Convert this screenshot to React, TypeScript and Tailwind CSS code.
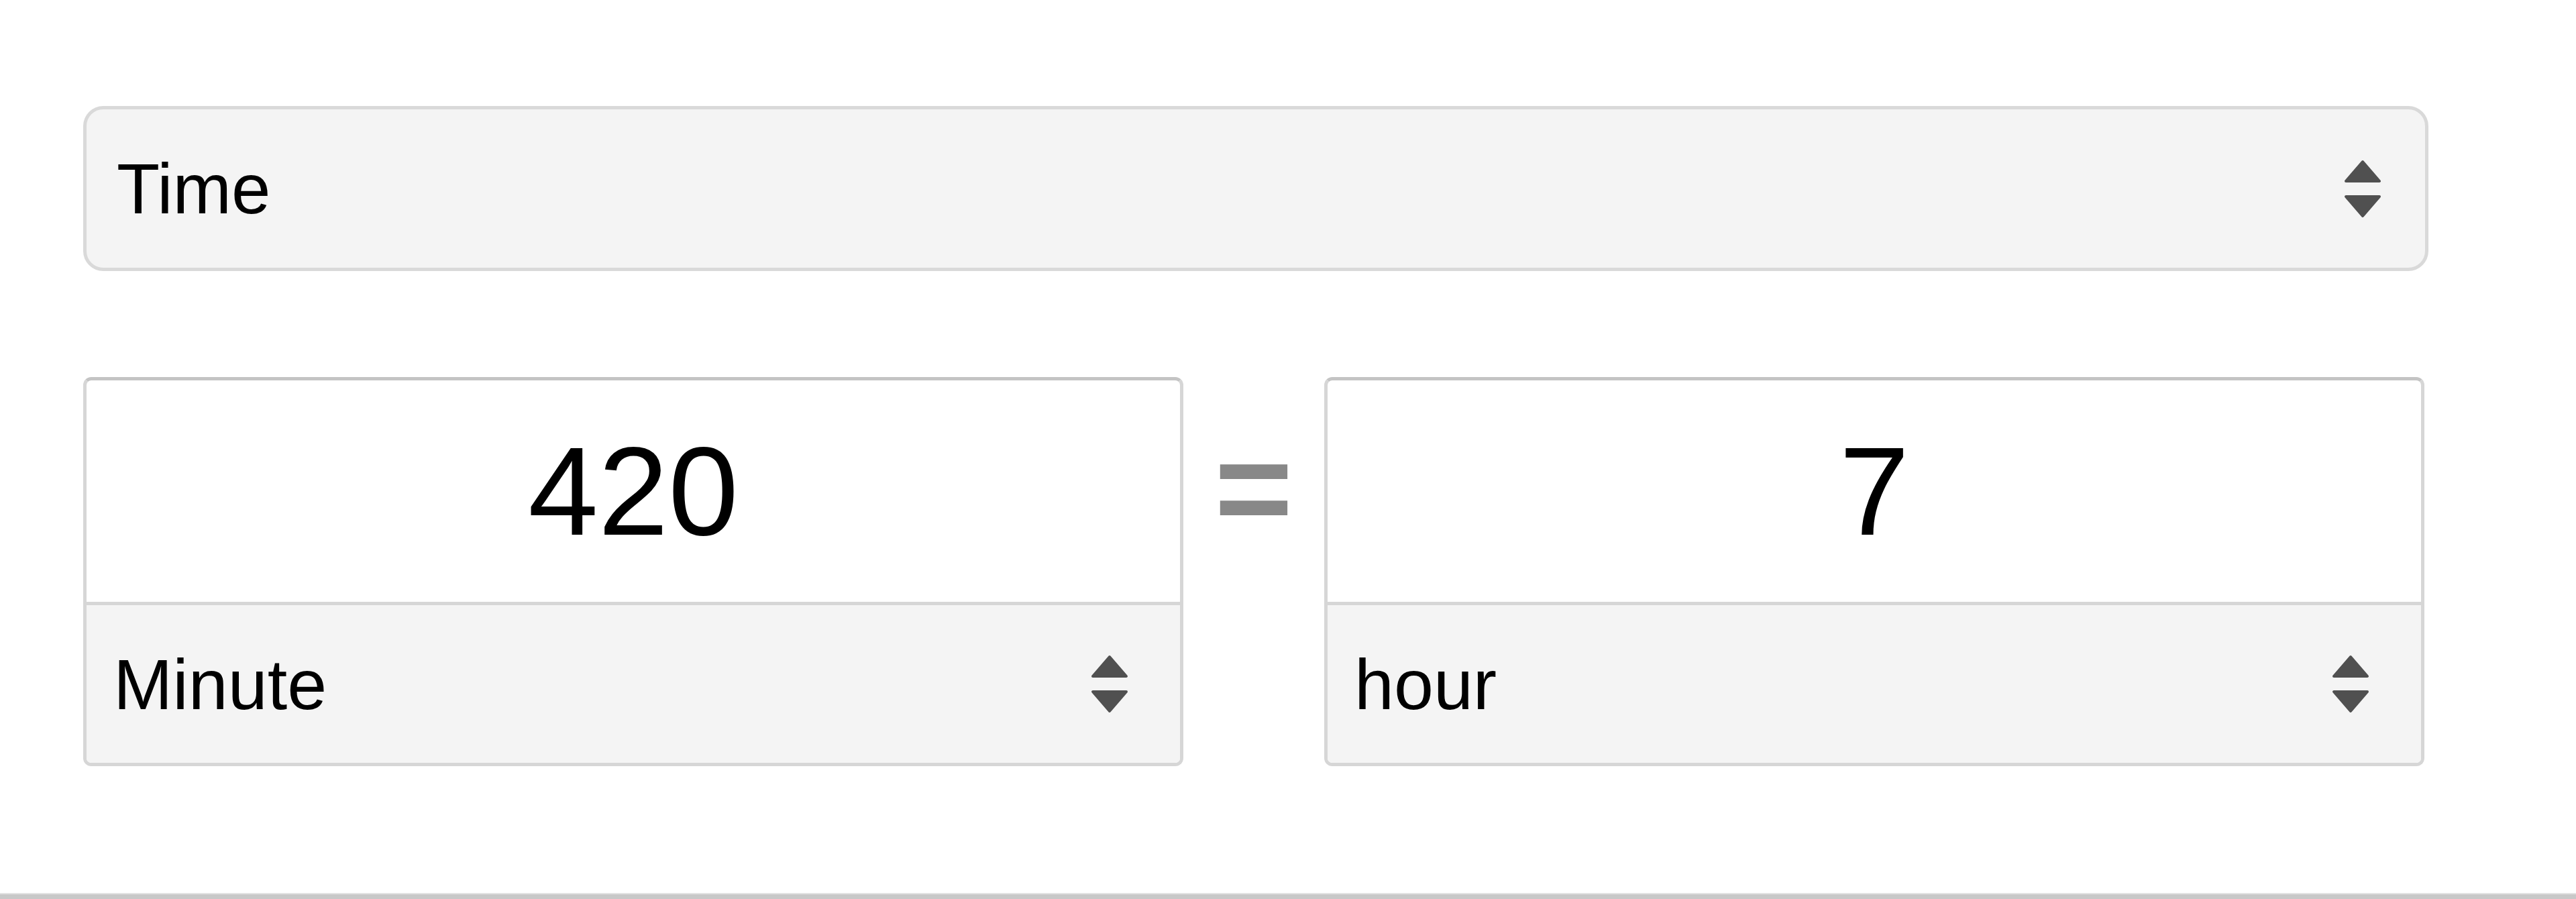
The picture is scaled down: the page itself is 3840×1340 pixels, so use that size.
// Convertidor de unidades: selector de magnitud arriba, dos cajas valor/unidad abajo.
const FUENTE = "font-['Liberation_Sans',Arial,sans-serif]";

function Flechas() {
  return (
    <svg width="56" height="87" viewBox="0 0 56 87" className="shrink-0" aria-hidden>
      <path d="M28 3 L53 32 L3 32 Z" fill="#505050" stroke="#505050" strokeWidth="4" strokeLinejoin="round" />
      <path d="M3 55 L53 55 L28 84 Z" fill="#505050" stroke="#505050" strokeWidth="4" strokeLinejoin="round" />
    </svg>
  );
}

function Caja({ valor, unidad, ancho }: { valor: string; unidad: string; ancho: string }) {
  return (
    <div
      className={`${ancho} flex flex-col overflow-hidden rounded-[12px] border-[5px] border-[#d6d6d6] border-t-[#c4c4c4] bg-white`}
    >
      <div className="flex h-[335px] items-center justify-center border-b-[5px] border-[#d6d6d6] text-[188px] leading-none text-black">
        {valor}
      </div>
      <div className="flex h-[235px] items-center justify-between bg-[#f4f4f4] pl-[40px] pr-[77px]">
        <span className="text-[106px] leading-none text-black">{unidad}</span>
        <Flechas />
      </div>
    </div>
  );
}

export default function App() {
  return (
    <div className={`flex h-[1340px] w-[3840px] flex-col bg-white ${FUENTE}`}>
      <div className="flex-1 pl-[124px] pt-[158px]">
        <div className="flex h-[246px] w-[3496px] items-center justify-between rounded-[30px] border-[5px] border-[#d9d9d9] bg-[#f4f4f4] pl-[45px] pr-[65px]">
          <span className="text-[105px] leading-none text-black">Time</span>
          <Flechas />
        </div>

        <div className="mt-[158px] flex items-start">
          <Caja valor="420" unidad="Minute" ancho="w-[1640px]" />
          <div className="flex h-[340px] w-[210px] items-center justify-center pb-[8px] text-[200px] font-bold leading-none text-[#888888]">
            =
          </div>
          <Caja valor="7" unidad="hour" ancho="w-[1640px]" />
        </div>
      </div>
      <div className="h-[2px] bg-[#e2e2e2]" />
      <div className="h-[7px] bg-[#c8c8c8]" />
    </div>
  );
}
